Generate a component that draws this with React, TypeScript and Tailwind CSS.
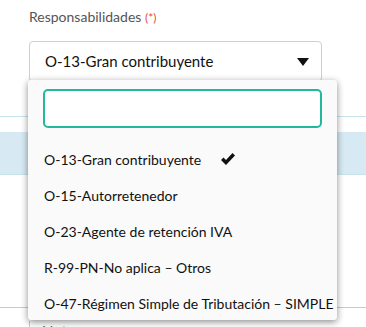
import React from "react";

const items = [
  "O-13-Gran contribuyente",
  "O-15-Autorretenedor",
  "O-23-Agente de retención IVA",
  "R-99-PN-No aplica – Otros",
  "O-47-Régimen Simple de Tributación – SIMPLE",
];

export default function App() {
  return (
    <div
      className="relative w-[366px] h-[327px] overflow-hidden bg-white"
      style={{ fontFamily: "Lato, 'Open Sans', sans-serif" }}
    >
      <div className="pl-[29px] pt-[8px] text-[14px] leading-[18px] text-[#555555]">
        Responsabilidades <span className="text-[#e74c3c] text-[12px]">(*)</span>
      </div>
      <div className="ml-[29px] mt-[14px] w-[293px] h-[41px] border border-[#cfcfcf] rounded-[4px] flex items-center justify-between pl-[15px] pr-[12px]">
        <span className="text-[15px] text-[#111]">O-13-Gran contribuyente</span>
        <svg width="12" height="8" viewBox="0 0 12 8">
          <polygon points="0,0 12,0 6,8" fill="#111" />
        </svg>
      </div>
      <div className="h-[34px]" />
      <div className="h-px bg-[#c5e4ec]" />
      <div className="h-[15px]" />
      <div className="h-[43px] bg-[#d7eaf4] border-b border-[#c5e4ec]" />
      <div className="h-[132px]" />
      <div className="h-px bg-[#c9c9c9]" />
      <div className="ml-[29px] mt-[13px] border-l border-[#c9c9c9] pl-[12px] text-[15px] text-[#555] leading-[20px]">
        Nota
      </div>

      <div className="absolute left-[28px] top-[80px] w-[309px] h-[240px] bg-[#fafafa] shadow-[0_2px_7px_rgba(0,0,0,0.45)] rounded-[3px] pt-[9px]">
        <div className="ml-[15px] w-[279px] h-[39px] border-2 border-solid border-[color:#22b99a] rounded-[5px] bg-white" />
        <div className="pt-[13px]">
          {items.map((t, i) => (
            <div key={t} className="h-[36px] flex items-center pl-[16px] text-[14px] text-[#111]">
              <span>{t}</span>
              {i === 0 && (
                <svg className="ml-[20px]" width="14" height="12" viewBox="0 0 14 12">
                  <polygon points="0,7 2.5,4.5 5,7 11.5,0 14,2.5 5,12" fill="#111" />
                </svg>
              )}
            </div>
          ))}
        </div>
      </div>
    </div>
  );
}
